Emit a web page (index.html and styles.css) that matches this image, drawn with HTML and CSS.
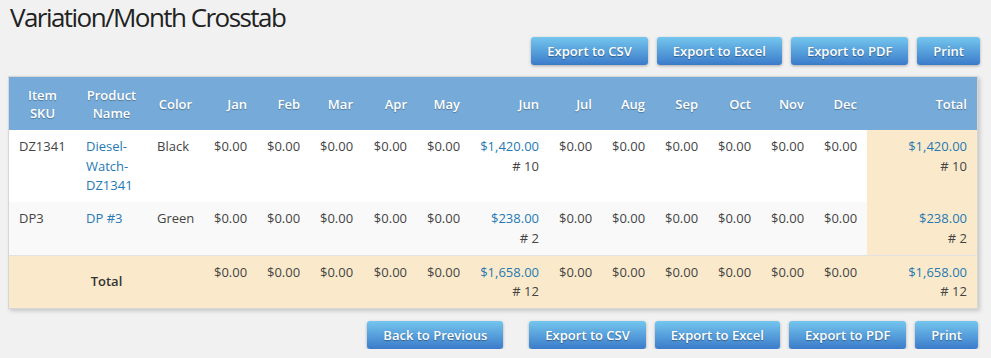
FILE: index.html
```html
<!DOCTYPE html>
<html>
<head>
<meta charset="utf-8">
<link rel="stylesheet" href="styles.css">
</head>
<body>
<div class="page">
  <h1 class="title">Variation/Month Crosstab</h1>
  <div class="toolbar toolbar-top">
    <a class="btn">Export to CSV</a>
    <a class="btn">Export to Excel</a>
    <a class="btn">Export to PDF</a>
    <a class="btn">Print</a>
  </div>
  <div class="report">
    <table class="grid">
      <colgroup>
        <col class="w-sku"><col class="w-prod"><col class="w-color">
        <col class="w-m"><col class="w-m"><col class="w-m"><col class="w-m54"><col class="w-m">
        <col class="w-jun">
        <col class="w-m"><col class="w-m"><col class="w-m"><col class="w-m"><col class="w-m"><col class="w-m">
        <col>
      </colgroup>
      <thead>
        <tr>
          <th class="c">Item SKU</th>
          <th class="c">Product Name</th>
          <th class="c">Color</th>
          <th>Jan</th><th>Feb</th><th>Mar</th><th>Apr</th><th>May</th><th>Jun</th>
          <th>Jul</th><th>Aug</th><th>Sep</th><th>Oct</th><th>Nov</th><th>Dec</th>
          <th>Total</th>
        </tr>
      </thead>
      <tbody>
        <tr class="odd">
          <td class="l">DZ1341</td>
          <td class="l"><a class="lnk">Diesel-Watch-DZ1341</a></td>
          <td class="l">Black</td>
          <td>$0.00</td><td>$0.00</td><td>$0.00</td><td>$0.00</td><td>$0.00</td>
          <td><a class="lnk">$1,420.00</a><br># 10</td>
          <td>$0.00</td><td>$0.00</td><td>$0.00</td><td>$0.00</td><td>$0.00</td><td>$0.00</td>
          <td class="tot"><a class="lnk">$1,420.00</a><br># 10</td>
        </tr>
        <tr class="even">
          <td class="l">DP3</td>
          <td class="l"><a class="lnk">DP #3</a></td>
          <td class="l">Green</td>
          <td>$0.00</td><td>$0.00</td><td>$0.00</td><td>$0.00</td><td>$0.00</td>
          <td><a class="lnk">$238.00</a><br># 2</td>
          <td>$0.00</td><td>$0.00</td><td>$0.00</td><td>$0.00</td><td>$0.00</td><td>$0.00</td>
          <td class="tot"><a class="lnk">$238.00</a><br># 2</td>
        </tr>
      </tbody>
      <tfoot>
        <tr>
          <td class="foot-label" colspan="3">Total</td>
          <td>$0.00</td><td>$0.00</td><td>$0.00</td><td>$0.00</td><td>$0.00</td>
          <td><a class="lnk">$1,658.00</a><br># 12</td>
          <td>$0.00</td><td>$0.00</td><td>$0.00</td><td>$0.00</td><td>$0.00</td><td>$0.00</td>
          <td><a class="lnk">$1,658.00</a><br># 12</td>
        </tr>
      </tfoot>
    </table>
  </div>
  <div class="toolbar toolbar-bottom">
    <a class="btn btn-back">Back to Previous</a>
    <a class="btn">Export to CSV</a>
    <a class="btn">Export to Excel</a>
    <a class="btn">Export to PDF</a>
    <a class="btn">Print</a>
  </div>
</div>
</body>
</html>
```
FILE: styles.css
```css
html, body {
  margin: 0;
  padding: 0;
  background: #f1f1f1;
}
body {
  font-family: "Open Sans", "Liberation Sans", sans-serif;
  font-size: 13px;
  color: #444;
}
.page {
  width: 970px;
  padding: 0 8px;
}
.title {
  margin: 0 0 0 2px;
  font-size: 26px;
  line-height: 34px;
  font-weight: 400;
  letter-spacing: -1.55px;
  color: #222;
}
.toolbar {
  display: flex;
  justify-content: flex-end;
  gap: 9px;
}
.toolbar-top {
  margin-top: 3px;
  margin-right: -2px;
}
.toolbar-bottom {
  margin-top: 12px;
}
.btn {
  display: inline-block;
  height: 28px;
  line-height: 28px;
  padding: 0 16px;
  border-radius: 3px;
  background: linear-gradient(#74c6ee, #3b7bca);
  color: #fff;
  font-weight: 600;
  font-size: 13px;
  text-shadow: 0 1px 1px rgba(0, 0, 0, 0.35);
  box-shadow: 0 1px 3px rgba(0, 0, 0, 0.3);
  cursor: pointer;
}
.btn-back {
  margin-right: 17px;
}
.report {
  margin-top: 11px;
  border: 1px solid #d6d6d6;
  background: #fff;
  box-shadow: 2px 2px 4px rgba(0, 0, 0, 0.18);
}
.grid {
  width: 100%;
  table-layout: fixed;
  border-collapse: collapse;
}
.w-sku { width: 67px; }
.w-prod { width: 71px; }
.w-color { width: 57px; }
.w-m { width: 53px; }
.w-m54 { width: 54px; }
.w-jun { width: 79px; }
.grid th {
  background: #75aad9;
  color: #fff;
  font-weight: 600;
  line-height: 18px;
  padding: 9px 10px 8px;
  text-align: right;
  vertical-align: middle;
  text-shadow: 0 1px 1px rgba(0, 0, 0, 0.3);
}
.grid th.c {
  text-align: center;
}
.grid td {
  padding: 7px 10px 6.5px;
  line-height: 19.5px;
  text-align: right;
  vertical-align: top;
}
.grid td.l {
  text-align: left;
}
.odd td {
  background: #fff;
}
.even td {
  background: #f9f9f9;
}
.grid td.tot {
  background: #faeacb;
}
.grid tfoot td {
  background: #faeacb;
  border-top: 1px solid #e2e2e2;
}
.grid td.foot-label {
  text-align: center;
  vertical-align: middle;
  font-weight: 600;
  color: #333;
}
.lnk {
  color: #2679b3;
  text-decoration: none;
}
```
